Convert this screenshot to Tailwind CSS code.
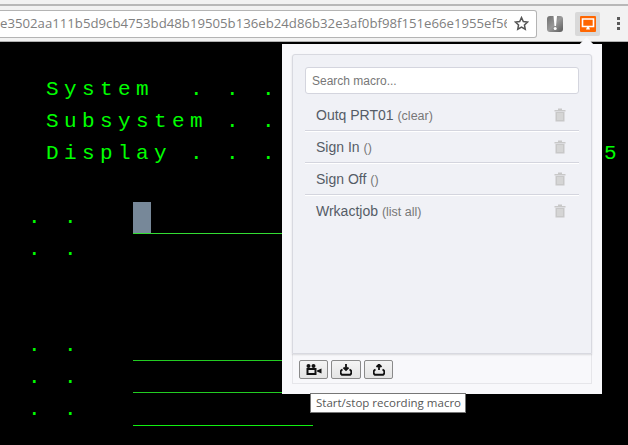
<!doctype html>
<html lang="en">
<head>
    <meta charset="UTF-8">
    <title>Macro</title>
    <script src="https://cdn.jsdelivr.net/npm/@tailwindcss/browser@4"></script>
</head>
<body class="relative w-[628px] h-[445px] overflow-hidden bg-black font-['Liberation_Sans',sans-serif]">

<!-- browser toolbar -->
<header class="h-[42px] bg-[#f2f2f2] pt-[4px]">
    <div class="h-[38px] border-t-2 border-t-[#b8b8b8] border-b border-b-[#b0b0b0] flex items-center">
        <div class="w-[537px] h-[28px] shrink-0 bg-white border border-l-0 border-[#b4b4b4] rounded-r-[3px] flex items-center overflow-hidden">
            <div class="w-[507px] overflow-hidden whitespace-nowrap text-[13.2px] text-[#808080] font-['Open_Sans',sans-serif]">e3502aa111b5d9cb4753bd48b19505b136eb24d86b32e3af0bf98f151e66e1955ef56</div>
            <svg class="ml-[7px] w-[15px] h-[15px]" viewBox="0 0 24 24" fill="none" stroke="#555" stroke-width="2.4"><path d="M12 2.5l2.900 6.300 6.800.8-5 4.700 1.300 6.800-6-3.400-6 3.400 1.300-6.800-5-4.700 6.800-.8z"/></svg>
        </div>
        <div class="ml-[10px] w-[16px] h-[16px] rounded-[3px] bg-gradient-to-br from-[#6e6e6e] via-[#999] to-[#5a5a5a]">
            <svg class="w-[16px] h-[16px]" viewBox="0 0 16 16"><path d="M6.500 0H10L9 10H7.500z" fill="#fff"/><circle cx="8.200" cy="12.500" r="1.500" fill="#fff"/></svg>
        </div>
        <div class="ml-[12px] w-[25px] h-[24px] bg-[#d9d9d9] rounded-[2px] flex items-center justify-center">
            <div class="w-[16px] h-[16px] bg-[#ff6600] rounded-[1px] flex items-center justify-center">
                <svg class="w-[14px] h-[14px]" viewBox="0 0 14 14"><path d="M1.500 2h11v7.500h-11z" fill="none" stroke="#fff" stroke-width="1.600"/><path d="M5 12.500h4l-1-2.500H6z" fill="#fff"/></svg>
            </div>
        </div>
        <div class="ml-[17px] flex flex-col gap-[2px]">
            <span class="w-[3px] h-[3px] bg-[#5a5a5a]"></span>
            <span class="w-[3px] h-[3px] bg-[#5a5a5a]"></span>
            <span class="w-[3px] h-[3px] bg-[#5a5a5a]"></span>
        </div>
    </div>
</header>

<!-- terminal screen -->
<main class="pt-[32px] pl-[28px] font-['Liberation_Mono',monospace] text-[21px] leading-[32px] tracking-[5.4px] text-[#00ff00]">
    <div class="h-[32px] whitespace-pre"> System  . . . . . . .</div>
    <div class="h-[32px] whitespace-pre"> Subsystem . . . . . .</div>
    <div class="h-[32px] whitespace-pre"> Display . . . . . . .          5</div>
    <div class="h-[32px]"></div>
    <div class="h-[32px] relative whitespace-pre">. .<span class="absolute left-[105px] top-0 w-[18px] h-[31px] bg-[#778899]"></span><span class="absolute left-[105px] top-[31px] w-[180px] h-px bg-[#33dd33]"></span></div>
    <div class="h-[32px] whitespace-pre">. .</div>
    <div class="h-[32px]"></div>
    <div class="h-[32px]"></div>
    <div class="h-[32px] relative whitespace-pre">. .<span class="absolute left-[105px] top-[30px] w-[180px] h-px bg-[#22cc22]"></span></div>
    <div class="h-[32px] relative whitespace-pre">. .<span class="absolute left-[105px] top-[30px] w-[180px] h-px bg-[#22cc22]"></span></div>
    <div class="h-[32px] relative whitespace-pre">. .<span class="absolute left-[105px] top-[31px] w-[180px] h-px bg-[#11ee11]"></span></div>
</main>

<!-- extension popup -->
<div class="absolute left-[282px] top-[44px] w-[320px] h-[350px] bg-[#f8f8fb] p-[10px] flex flex-col">
    <div class="absolute left-[298px] top-[-4px] w-[13px] h-[13px] rotate-45 bg-[#f8f8fb]"></div>
    <div class="relative h-[300px] bg-[#f0f1f6] border border-[#d8d9e0] rounded-t-[3px] shadow-[0_1px_2px_rgba(0,0,0,0.12)] px-[12px] pt-[12px]">
        <input class="block w-[274px] h-[27px] bg-white border border-[#d4d5de] rounded-[3px] px-[6px] text-[12px] text-[#555] placeholder:text-[#777] outline-none" placeholder="Search macro...">
        <ul class="mt-[5px] text-[#555c66]">
            <li class="h-[32px] flex items-center justify-between pl-[11px] pr-[13px] pt-px border-b border-[#d4d5de] shadow-[0_1px_0_#fff]"><span class="text-[14px]">Outq PRT01 <span class="text-[12.500px] text-[#777]">(clear)</span></span>
                <svg class="w-[12px] h-[14px]" viewBox="0 0 12 14"><path d="M0.500 2h11v1.400H.5zM4 .5h4V2H4zM1.500 4h9v9.500h-9z" fill="#c8c8c8"/><path d="M4 5v7M6 5v7M8 5v7" stroke="#e2e2e2"/></svg></li>
            <li class="h-[32px] flex items-center justify-between pl-[11px] pr-[13px] pt-px border-b border-[#d4d5de] shadow-[0_1px_0_#fff]"><span class="text-[14px]">Sign In <span class="text-[12.500px] text-[#777]">()</span></span>
                <svg class="w-[12px] h-[14px]" viewBox="0 0 12 14"><path d="M0.500 2h11v1.400H.5zM4 .5h4V2H4zM1.500 4h9v9.500h-9z" fill="#c8c8c8"/><path d="M4 5v7M6 5v7M8 5v7" stroke="#e2e2e2"/></svg></li>
            <li class="h-[32px] flex items-center justify-between pl-[11px] pr-[13px] pt-px border-b border-[#d4d5de] shadow-[0_1px_0_#fff]"><span class="text-[14px]">Sign Off <span class="text-[12.500px] text-[#777]">()</span></span>
                <svg class="w-[12px] h-[14px]" viewBox="0 0 12 14"><path d="M0.500 2h11v1.400H.5zM4 .5h4V2H4zM1.500 4h9v9.500h-9z" fill="#c8c8c8"/><path d="M4 5v7M6 5v7M8 5v7" stroke="#e2e2e2"/></svg></li>
            <li class="h-[32px] flex items-center justify-between pl-[11px] pr-[13px]"><span class="text-[14px]">Wrkactjob <span class="text-[12.500px] text-[#777]">(list all)</span></span>
                <svg class="w-[12px] h-[14px]" viewBox="0 0 12 14"><path d="M0.500 2h11v1.400H.5zM4 .5h4V2H4zM1.500 4h9v9.500h-9z" fill="#c8c8c8"/><path d="M4 5v7M6 5v7M8 5v7" stroke="#e2e2e2"/></svg></li>
        </ul>
    </div>
    <div class="h-[30px] border border-t-0 border-[#e6e6ea] flex items-start pt-[6px] gap-[3px] pl-[6px]">
        <button class="w-[29px] h-[19px] bg-gradient-to-b from-[#f4f4f4] to-[#e4e4e4] border border-[#8a8a8a] rounded-[2px] flex items-center justify-center">
            <svg class="w-[16px] h-[11px]" viewBox="0 0 16 11"><circle cx="2.500" cy="2" r="2" fill="#111"/><circle cx="7.500" cy="2" r="2" fill="#111"/><path d="M.5 4h10v7H.5zM2.500 6v3h6V6z" fill="#111" fill-rule="evenodd"/><path d="M11 6.500l4.500-2v5l-4.500-2z" fill="#111"/></svg>
        </button>
        <button class="w-[30px] h-[19px] bg-gradient-to-b from-[#f4f4f4] to-[#e4e4e4] border border-[#8a8a8a] rounded-[2px] flex items-center justify-center">
            <svg class="w-[12px] h-[12px]" viewBox="0 0 12 12"><path d="M6 0v5M3.500 3.500L6 6l2.500-2.500" fill="none" stroke="#111" stroke-width="1.800"/><path d="M2.500 5.500C-.5 7 .5 10 2 10.800h8c1.500-.8 2.500-3.800-.5-5.300" fill="none" stroke="#111" stroke-width="1.900"/></svg>
        </button>
        <button class="w-[29px] h-[19px] bg-gradient-to-b from-[#f4f4f4] to-[#e4e4e4] border border-[#8a8a8a] rounded-[2px] flex items-center justify-center">
            <svg class="w-[12px] h-[12px]" viewBox="0 0 12 12"><path d="M6 6V.8M3.500 3L6 .5 8.500 3" fill="none" stroke="#111" stroke-width="1.800"/><path d="M2.500 5.500C-.5 7 .5 10 2 10.800h8c1.500-.8 2.500-3.800-.5-5.300" fill="none" stroke="#111" stroke-width="1.900"/></svg>
        </button>
    </div>
</div>

<!-- tooltip -->
<div class="absolute left-[310px] top-[393px] h-[20px] w-[156px] bg-white border border-[#767676] flex items-center pl-[5px] text-[11.500px] text-[#575757] font-['Open_Sans',sans-serif] whitespace-nowrap">Start/stop recording macro</div>

</body>
</html>
